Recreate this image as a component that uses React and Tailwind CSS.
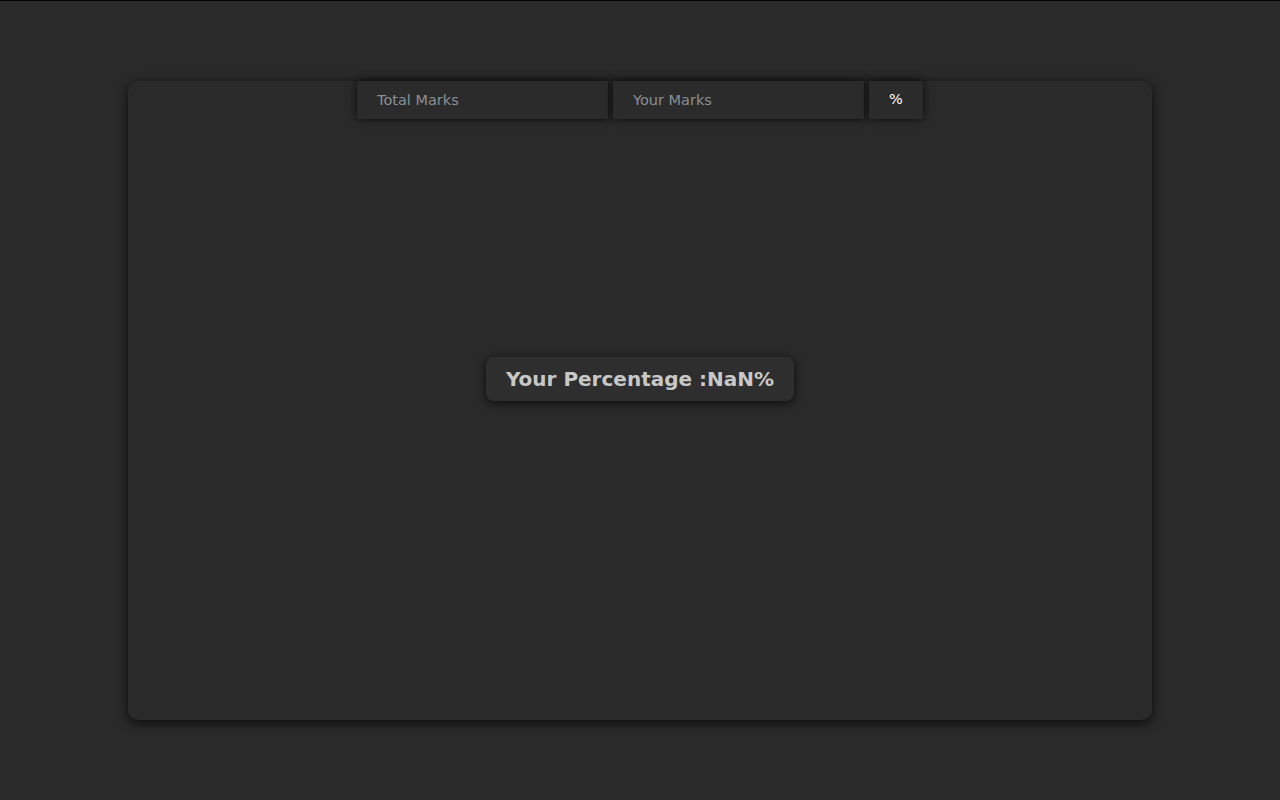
import React, { useState } from "react";

export default function App() {
  const [total, setTotal] = useState("");
  const [marks, setMarks] = useState("");
  const [pct, setPct] = useState("NaN");
  const calc = () => setPct(String((parseFloat(marks) / parseFloat(total)) * 100));
  return (
    <div
      className="min-h-[800px] bg-[#2a2a2a] border-t border-black pt-[80px]"
      style={{ fontFamily: '"DejaVu Sans", sans-serif' }}
    >
      <div className="mx-auto w-[1024px] h-[639px] rounded-[10px] bg-[#2a2a2a] shadow-[0_3px_12px_rgba(0,0,0,0.75)] flex flex-col items-center">
        <div className="flex gap-[5px]">
          <input
            value={total}
            onChange={(e) => setTotal(e.target.value)}
            placeholder="Total Marks"
            className="w-[251px] h-[38px] bg-[#2b2b2b] pl-[20px] text-[14.5px] text-[#c8c8c8] placeholder:text-[#8a9098] outline-none shadow-[0_0_8px_rgba(0,0,0,0.8)]"
          />
          <input
            value={marks}
            onChange={(e) => setMarks(e.target.value)}
            placeholder="Your Marks"
            className="w-[251px] h-[38px] bg-[#2b2b2b] pl-[20px] text-[14.5px] text-[#c8c8c8] placeholder:text-[#8a9098] outline-none shadow-[0_0_8px_rgba(0,0,0,0.8)]"
          />
          <button
            onClick={calc}
            className="w-[54px] h-[38px] bg-[#2b2b2b] text-[14.5px] text-white shadow-[0_0_8px_rgba(0,0,0,0.8)]"
          >
            %
          </button>
        </div>
        <div className="mt-[238px] w-[308px] h-[44px] rounded-[8px] bg-[#2e2e2e] shadow-[0_2px_10px_rgba(0,0,0,0.75)] flex items-center justify-center text-[20px] font-bold text-[#c8c8c8]">
          Your Percentage :{pct}%
        </div>
      </div>
    </div>
  );
}
